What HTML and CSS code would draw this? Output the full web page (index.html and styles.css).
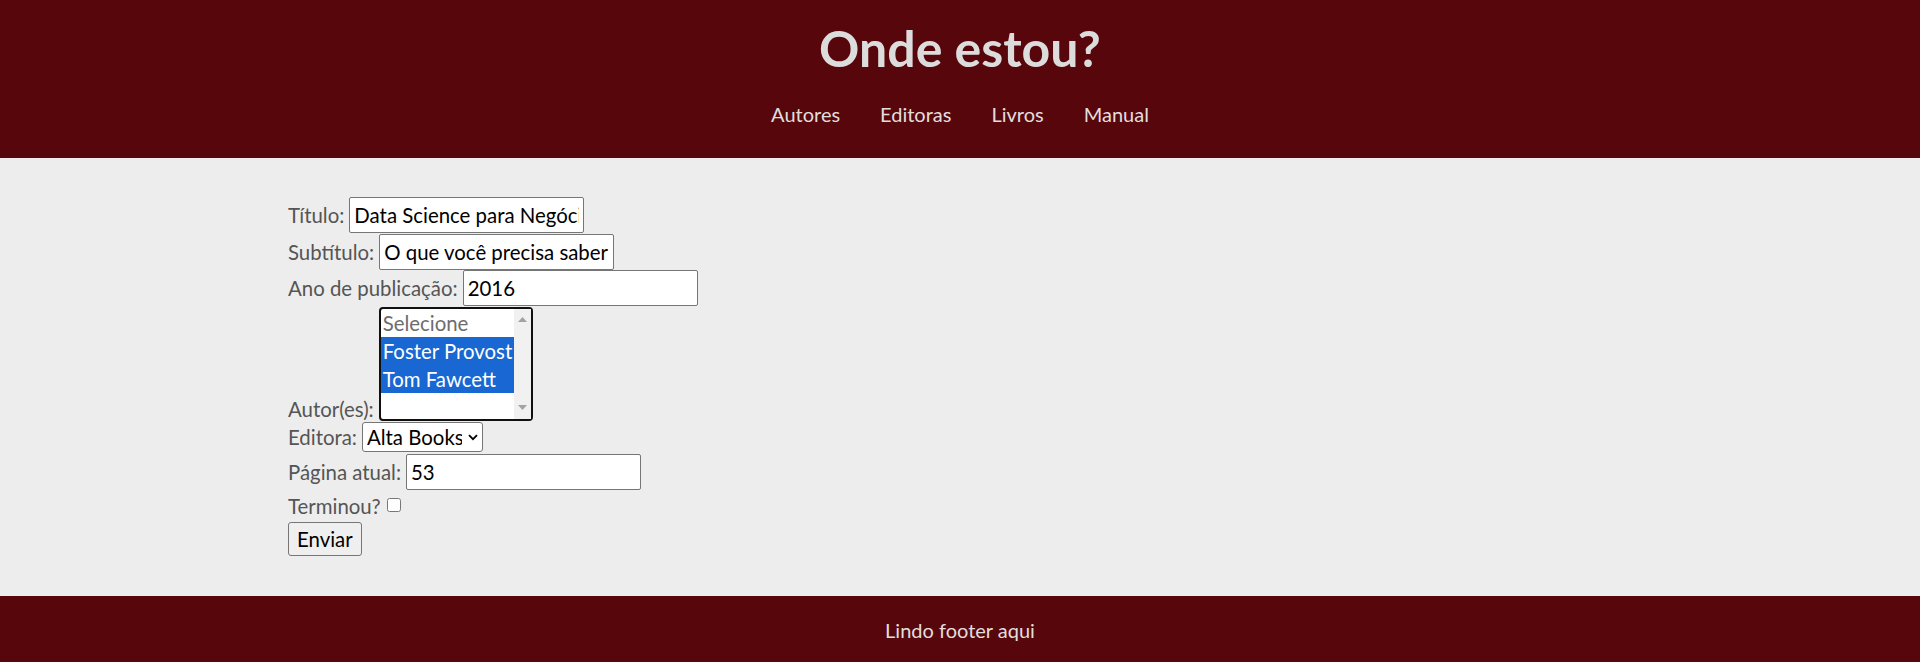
FILE: index.html
```html
<!DOCTYPE html>
<html lang="pt-BR">
<head>
<meta charset="utf-8">
<title>Onde estou?</title>
<link rel="stylesheet" href="styles.css">
</head>
<body>
<header class="site-header">
  <h1 class="site-title">Onde estou?</h1>
  <nav class="site-nav">
    <a href="#">Autores</a>
    <a href="#">Editoras</a>
    <a href="#">Livros</a>
    <a href="#">Manual</a>
  </nav>
</header>
<main class="content">
  <form class="book-form">
    <div class="field row-input">
      <label for="titulo">Título:</label>
      <input id="titulo" type="text" value="Data Science para Negócios">
    </div>
    <div class="field row-input">
      <label for="subtitulo">Subtítulo:</label>
      <input id="subtitulo" type="text" value="O que você precisa saber sobre mineração de dados">
    </div>
    <div class="field row-input">
      <label for="ano">Ano de publicação:</label>
      <input id="ano" type="text" value="2016">
    </div>
    <div class="field row-list">
      <label class="bottom-label">Autor(es):</label>
      <div class="listbox" role="listbox" aria-multiselectable="true">
        <div class="options">
          <div class="option placeholder">Selecione</div>
          <div class="option selected">Foster Provost</div>
          <div class="option selected">Tom Fawcett</div>
        </div>
        <div class="scrollbar">
          <svg width="9" height="5" viewBox="0 0 9 5"><path d="M0 5 L4.5 0 L9 5 Z" fill="#a3a3a3"/></svg>
          <svg width="9" height="5" viewBox="0 0 9 5"><path d="M0 0 L4.5 5 L9 0 Z" fill="#a3a3a3"/></svg>
        </div>
      </div>
    </div>
    <div class="field row-select">
      <label for="editora">Editora:</label>
      <span class="select-wrap">
        <select id="editora"><option>Alta Books</option></select>
        <svg class="chevron" width="10" height="7" viewBox="0 0 10 7"><path d="M1 1.2 L5 5.2 L9 1.2" fill="none" stroke="#000" stroke-width="1.8"/></svg>
      </span>
    </div>
    <div class="field row-input row-last">
      <label for="pagina">Página atual:</label>
      <input id="pagina" type="text" value="53">
    </div>
    <div class="field row-check">
      <label for="terminou">Terminou?</label>
      <input id="terminou" type="checkbox">
    </div>
    <div class="field row-button">
      <button type="button">Enviar</button>
    </div>
  </form>
</main>
<footer class="site-footer">Lindo footer aqui</footer>
</body>
</html>
```
FILE: styles.css
```css
html, body {
  margin: 0;
  padding: 0;
}
body {
  background: #ededed;
  font-family: Lato, "Open Sans", sans-serif;
  font-size: 20px;
  color: #555;
}
.site-header {
  background: #57070c;
  padding: 19px 0 32px;
  text-align: center;
}
.site-title {
  margin: 0 0 25px;
  font-size: 50px;
  line-height: 58px;
  font-weight: 700;
  color: #dcdcdc;
}
.site-nav {
  display: flex;
  justify-content: center;
  gap: 40px;
  line-height: 24px;
}
.site-nav a {
  color: #e2dede;
  text-decoration: none;
}
.content {
  padding: 39px 288px 40px;
}
.book-form {
  display: flex;
  flex-direction: column;
  font-size: 20.4px;
}
.field {
  display: flex;
  align-items: center;
  gap: 5px;
}
.field label {
  line-height: 24px;
}
.row-input {
  height: 36.5px;
}
.row-input.row-last {
  height: 36px;
}
.row-input input {
  box-sizing: border-box;
  width: 235px;
  height: 36px;
  margin: 0;
  padding: 0 4px;
  border: 1px solid #767676;
  border-radius: 2px;
  background: #fff;
  color: #000;
  font: inherit;
  outline: none;
}
.row-list {
  align-items: flex-end;
  height: 114px;
}
.listbox {
  box-sizing: border-box;
  width: 154px;
  height: 114px;
  border: 2px solid #101010;
  border-radius: 4px;
  background: #fff;
  display: flex;
}
.options {
  flex: 1;
}
.option {
  line-height: 28px;
  height: 28px;
  padding: 0 2px;
  color: #000;
  white-space: nowrap;
}
.option.placeholder {
  color: #6d6d6d;
}
.option.selected {
  background: #1967d2;
  color: #fff;
}
.scrollbar {
  width: 20px;
  background: #f1f1f1;
  display: flex;
  flex-direction: column;
  justify-content: space-between;
  align-items: center;
  padding: 8px 0 9px;
}
.row-select {
  height: 33px;
}
.select-wrap {
  position: relative;
  display: inline-block;
}
.select-wrap select {
  -webkit-appearance: none;
  appearance: none;
  box-sizing: border-box;
  width: 121px;
  height: 30px;
  margin: 0;
  padding: 0 20px 0 4px;
  border: 1px solid #767676;
  border-radius: 3px;
  background: #fff;
  color: #000;
  font: inherit;
}
.chevron {
  position: absolute;
  right: 5px;
  top: 12px;
  pointer-events: none;
}
.row-check {
  height: 32px;
  gap: 6px;
}
.row-check input {
  width: 14px;
  height: 14px;
  margin: 0;
  position: relative;
  top: -1px;
}
.row-button {
  height: 34px;
}
.row-button button {
  box-sizing: border-box;
  height: 34px;
  margin: 0;
  padding: 0 8px;
  border: 1px solid #767676;
  border-radius: 3px;
  background: #efefef;
  color: #000;
  font: inherit;
}
.site-footer {
  background: #57070c;
  color: #e2dede;
  text-align: center;
  line-height: 24px;
  padding: 22px 0 20px;
}
```
